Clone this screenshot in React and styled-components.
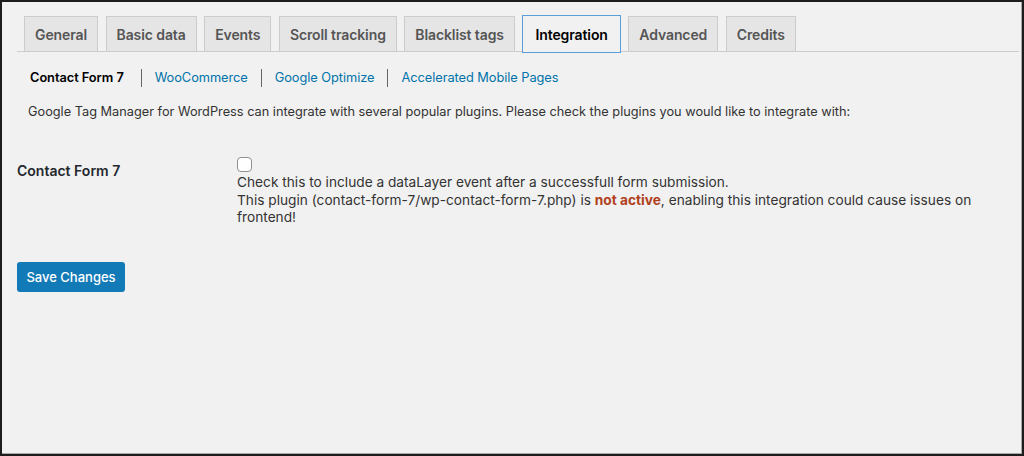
import styled, { createGlobalStyle } from 'styled-components';

const GlobalStyle = createGlobalStyle`
html, body {
  margin: 0;
  padding: 0;
  background: #f1f1f1;
}
* {
  box-sizing: border-box;
}
`

const tabs = ['General', 'Basic data', 'Events', 'Scroll tracking', 'Blacklist tags', 'Integration', 'Advanced', 'Credits'];
const subLinks = ['Contact Form 7', 'WooCommerce', 'Google Optimize', 'Accelerated Mobile Pages'];

function App() {
  return (
    <>
      <GlobalStyle />
      <Frame>
        <TabBar>
          {tabs.map((tab) => (
            <Tab key={tab} active={tab === 'Integration'}>{tab}</Tab>
          ))}
        </TabBar>
        <SubNav>
          {subLinks.map((link, i) => (
            <SubItem key={link} first={i === 0} current={i === 0}>{link}</SubItem>
          ))}
        </SubNav>
        <Intro>
          Google Tag Manager for WordPress can integrate with several popular plugins. Please check the plugins you would like to integrate with:
        </Intro>
        <FormRow>
          <FieldLabel>Contact Form 7</FieldLabel>
          <FieldBody>
            <CheckBox type="checkbox" />
            <HelpText>
              <HelpLine>Check this to include a dataLayer event after a successfull form submission.</HelpLine>
              <HelpLine>
                This plugin (contact-form-7/wp-contact-form-7.php) is <Warning>not active</Warning>, enabling this integration could cause issues on frontend!
              </HelpLine>
            </HelpText>
          </FieldBody>
        </FormRow>
        <SaveButton>Save Changes</SaveButton>
      </Frame>
    </>
  );
}

export default App;

const Frame = styled.div`
width: 1024px;
height: 456px;
border: 2px solid #1d1d1d;
box-shadow: inset -1px -1px 0 #a9a9a9;
background: #f1f1f1;
padding: 12px 3px 0 15px;
font-family: Inter, "Noto Sans", sans-serif;
color: #333;
overflow: hidden;
`

const TabBar = styled.div`
display: flex;
align-items: flex-end;
gap: 7.5px;
padding-left: 7px;
border-bottom: 1px solid #ccc;
height: 38px;
`

const Tab = styled.div`
height: ${(p) => (p.active ? '38px' : '35px')};
margin-bottom: ${(p) => (p.active ? '-2px' : '0')};
padding: 0 ${(p) => (p.active ? '12px' : '10px')};
display: flex;
align-items: center;
justify-content: center;
font-size: 14px;
font-weight: 600;
letter-spacing: -0.1px;
color: ${(p) => (p.active ? '#000' : '#555')};
background: ${(p) => (p.active ? '#f1f1f1' : '#e5e5e5')};
border: 1px solid ${(p) => (p.active ? '#5b9dd9' : '#ccc')};
border-bottom: ${(p) => (p.active ? '1px solid #5b9dd9' : 'none')};
`

const SubNav = styled.div`
display: flex;
align-items: center;
margin-top: 17px;
height: 18px;
`

const SubItem = styled.div`
padding: 0 13px;
padding-right: ${(p) => (p.first ? '17px' : '13px')};
font-size: 12.8px;
line-height: 18px;
letter-spacing: -0.05px;
font-weight: ${(p) => (p.current ? 600 : 400)};
color: ${(p) => (p.current ? '#000' : '#0073aa')};
border-left: ${(p) => (p.first ? 'none' : '1px solid #666')};
`

const Intro = styled.p`
margin: 16px 0 0 11px;
font-size: 12.75px;
line-height: 18px;
color: #333;
`

const FormRow = styled.div`
display: flex;
margin-top: 36px;
`

const FieldLabel = styled.div`
width: 220px;
flex-shrink: 0;
padding-top: 5px;
font-size: 14px;
font-weight: 600;
color: #23282d;
`

const FieldBody = styled.div`
display: flex;
flex-direction: column;
align-items: flex-start;
`

const CheckBox = styled.input`
appearance: none;
width: 15px;
height: 15px;
margin: 0 0 2px 0;
border: 1px solid #8c8f94;
border-radius: 4px;
background: #fff;
`

const HelpText = styled.div`
font-size: 13.7px;
line-height: 17.5px;
color: #333;
width: 760px;
`

const HelpLine = styled.div`
margin: 0;
`

const Warning = styled.span`
color: #b0401c;
font-weight: 700;
`

const SaveButton = styled.button`
margin-top: 35px;
width: 108px;
height: 30px;
border: none;
border-radius: 3px;
background: #127ab7;
color: #fff;
font-family: Inter, "Noto Sans", sans-serif;
font-size: 13px;
font-weight: 500;
padding: 0;
`
